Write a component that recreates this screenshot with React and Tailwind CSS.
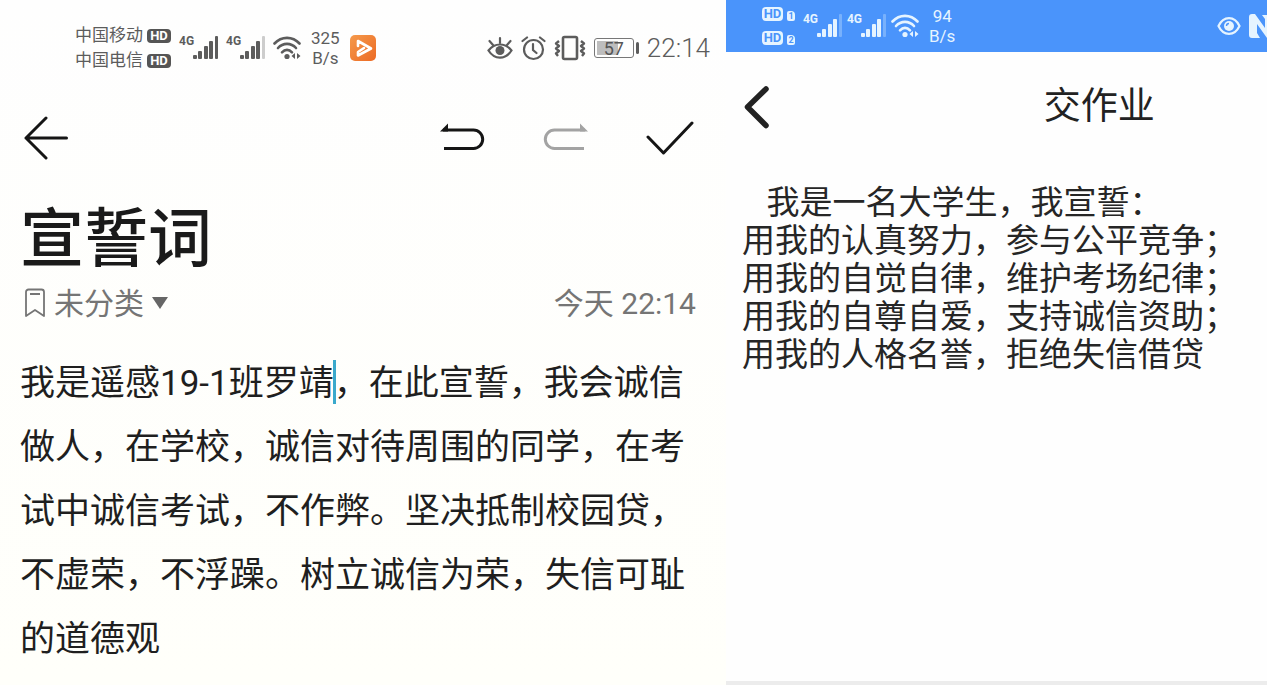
import { useState } from 'react'

const NOTE = '我是遥感19-1班罗靖，在此宣誓，我会诚信做人，在学校，诚信对待周围的同学，在考试中诚信考试，不作弊。坚决抵制校园贷，不虚荣，不浮躁。树立诚信为荣，失信可耻的道德观'

const HOMEWORK = [
  '   我是一名大学生，我宣誓：',
  '用我的认真努力，参与公平竞争；',
  '用我的自觉自律，维护考场纪律；',
  '用我的自尊自爱，支持诚信资助；',
  '用我的人格名誉，拒绝失信借贷',
].join('\n')

function Signal({ weak }) {
  return (
    <div className="flex items-start">
      <span className="w-3.5 text-[12px] leading-3 font-bold">4G</span>
      <svg width="25" height="26" viewBox="0 0 25 26" fill="currentColor">
        <rect x="0" y="20" width="4" height="4" rx="1" />
        <rect x="5" y="16" width="4" height="8" rx="1" />
        <rect x="11" y="11" width="4" height="13" rx="1" />
        <rect x="16" y="6" width="4" height="18" rx="1" />
        <rect x="22" y="1" width="3" height="23" rx="1" opacity={weak ? 0.3 : 1} />
      </svg>
    </div>
  )
}

function Wifi() {
  return (
    <svg width="28" height="24" viewBox="0 0 28 24" fill="none" stroke="currentColor" strokeWidth="2.600" strokeLinecap="round">
      <path d="M1.500 7.500C8.500 0 19.500 0 26.500 7.500" />
      <path d="M5 12c5-5.500 13-5.500 18 0" />
      <path d="M9 16.300c3-3.200 7-3.200 10 0" />
      <circle cx="14" cy="20.500" r="2.600" fill="currentColor" stroke="none" />
      <path d="M22 17v6l-3.500-3zM24 17v6l3.500-3z" fill="currentColor" stroke="none" />
    </svg>
  )
}

function Sim({ n }) {
  return (
    <div className="flex items-end gap-1">
      <span className="w-[21px] rounded-sm bg-[#e6f4ff] text-center text-[13px] leading-[14px] font-bold text-[#4a94fb]">HD</span>
      <span className="w-2 rounded-[2px] rounded-tr-sm bg-[#e6f4ff] text-center text-[9px] leading-[10px] font-bold text-[#4a94fb]">{n}</span>
    </div>
  )
}

function Speed({ value }) {
  return (
    <div className="text-center text-[17px] leading-5">
      <div>{value}</div>
      <div>B/s</div>
    </div>
  )
}

function NoteStatusBar() {
  return (
    <div className="flex h-24 items-center pr-4 pl-[75px] text-[#5c5c5c]">
      <div className="text-[17px] leading-[25px]">
        {['中国移动', '中国电信'].map(name => (
          <div key={name} className="flex items-center gap-1">
            {name}
            <span className="w-6 rounded-sm bg-[#555] text-center text-[13px] leading-[14px] font-bold text-white">HD</span>
          </div>
        ))}
      </div>
      <div className="ml-2 flex items-center gap-2">
        <Signal />
        <Signal weak />
        <Wifi />
      </div>
      <div className="ml-2.5 flex items-center gap-2.5">
        <Speed value="325" />
        <svg width="26" height="26" viewBox="0 0 26 26">
          <defs>
            <linearGradient id="play" x1="0" y1="0" x2="1" y2="1">
              <stop offset="0" stopColor="#f59a4c" />
              <stop offset="1" stopColor="#ec6a24" />
            </linearGradient>
          </defs>
          <rect width="26" height="26" rx="5" fill="url(#play)" />
          <path d="M8 11V6l13 7.500L8 20.500V17l6-4" fill="none" stroke="#fff" strokeWidth="2.600" strokeLinejoin="round" strokeLinecap="round" />
        </svg>
      </div>

      <div className="ml-auto flex items-center gap-2">
        <svg width="26" height="24" viewBox="0 0 26 24" fill="none" stroke="currentColor" strokeWidth="2.200" strokeLinecap="round">
          <path d="M1.500 14.500C7.500 6.500 18.500 6.500 24.500 14.500 18.500 24 7.500 24 1.500 14.500z" />
          <path d="M13 2v5M2.500 5l3.500 4M23.500 5 20 9" />
          <circle cx="13" cy="14.500" r="4.500" fill="currentColor" stroke="none" />
        </svg>
        <svg width="25" height="25" viewBox="0 0 25 25" fill="none" stroke="currentColor" strokeWidth="2.200" strokeLinecap="round">
          <circle cx="12.500" cy="13.500" r="9.500" />
          <path d="M12 8v6l3.500 3M1.500 5 6 1.500M23.500 5 19 1.500" />
        </svg>
        <svg width="32" height="26" viewBox="0 0 32 26" fill="none" stroke="currentColor" strokeWidth="2.600" strokeLinejoin="round">
          <rect x="9" y="2" width="14" height="22" rx="1.500" />
          <path d="M5 6 2 8.500 5 11l-3 2.500L5 16l-3 2.500L4 21M27 6l3 2.500-3 2.500 3 2.500-3 2.500 3 2.500-2 2.500" strokeWidth="2.400" />
        </svg>
        <div className="flex items-center gap-0.5">
          <div className="h-5 w-10 rounded-[3px] border border-[#777] bg-linear-to-r from-[#bdbdbd] from-60% to-transparent to-60% bg-clip-content p-0.5 text-center text-[18px] leading-[15px] text-[#555]">57</div>
          <div className="h-3 w-[3px] rounded-xs bg-[#5c5c5c]" />
        </div>
        <span className="text-[26px] leading-8 font-light">22:14</span>
      </div>
    </div>
  )
}

function NoteScreen() {
  const [text, setText] = useState(NOTE)

  return (
    <section className="flex w-[57.3%] shrink-0 flex-col bg-linear-to-b from-[#fefefe] to-[#fffffa]">
      <NoteStatusBar />

      <div className="flex h-[84px] items-center pr-8 pl-6 text-[#151515]">
        <button aria-label="返回">
          <svg width="44" height="44" viewBox="0 0 44 44" fill="none" stroke="currentColor" strokeWidth="3" strokeLinecap="round" strokeLinejoin="round">
            <path d="M22 2 2 22l20 20M2 22h40.500" />
          </svg>
        </button>
        <div className="ml-auto flex items-center gap-[58px]">
          <button aria-label="撤销">
            <svg width="45" height="30" viewBox="0 2 45 30" fill="none" stroke="currentColor" strokeWidth="3">
              <path d="M3 9h30.500a9.200 9.200 0 0 1 0 18.400H4" />
              <path d="M0 10.500 8 2.500v8z" fill="currentColor" stroke="none" />
            </svg>
          </button>
          <button aria-label="重做" className="text-[#a3a3a3]">
            <svg width="45" height="30" viewBox="0 2 45 30" fill="none" stroke="currentColor" strokeWidth="3">
              <path d="M42 9H11.500a9.200 9.200 0 0 0 0 18.400H41" />
              <path d="M45 10.500 37 2.500v8z" fill="currentColor" stroke="none" />
            </svg>
          </button>
          <button aria-label="完成">
            <svg width="48" height="34" viewBox="0 0 48 34" fill="none" stroke="currentColor" strokeWidth="3" strokeLinecap="round" strokeLinejoin="round">
              <path d="M2 16l15.500 16L46 2" />
            </svg>
          </button>
        </div>
      </div>

      <h1 className="mt-[22px] px-5 text-[64px] leading-[76px] font-medium text-[#1a1a1a]">宣誓词</h1>

      <div className="flex h-[50px] items-center justify-between pr-[30px] pl-6 text-[30px] text-[#757575]">
        <button className="flex items-center gap-2">
          <svg width="22" height="30" viewBox="0 0 22 30" fill="none" stroke="currentColor" strokeWidth="1.800" strokeLinejoin="round">
            <path d="M2 4a2.500 2.500 0 0 1 2.500-2.500h13A2.500 2.500 0 0 1 20 4v24l-9-6-9 6zM6 6h10" />
          </svg>
          未分类
          <svg width="16" height="12" viewBox="0 0 16 12" fill="#666">
            <path d="M0 0h16L8 12z" />
          </svg>
        </button>
        <span>今天 22:14</span>
      </div>

      <div className="relative pt-6">
        <textarea
          aria-label="笔记内容"
          rows={5}
          value={text}
          onChange={(e) => setText(e.target.value)}
          className="block w-full resize-none overflow-hidden px-5 text-[35px] leading-[64px] text-[#1f1f1f] caret-[#2fa8cc] outline-none"
        />
        <span className="absolute top-8 left-[333px] h-11 w-[3px] bg-[#3aa9cc]" />
      </div>
    </section>
  )
}

function HomeworkScreen() {
  const [text, setText] = useState(HOMEWORK)

  return (
    <section className="flex min-w-0 flex-1 flex-col overflow-hidden bg-[#fefefe]">
      <div className="flex h-[52px] items-center overflow-hidden bg-[#4a94fb] pl-9 text-[#e6f4ff]">
        <div className="flex flex-col gap-2.5">
          <Sim n="1" />
          <Sim n="2" />
        </div>
        <div className="ml-2 flex items-center gap-[5px]">
          <Signal weak />
          <Signal weak />
          <Wifi />
        </div>
        <div className="ml-2.5">
          <Speed value="94" />
        </div>
        <div className="-mr-1.5 ml-auto flex items-center gap-2">
          <svg width="24" height="20" viewBox="0 0 24 20" fill="none" stroke="currentColor" strokeWidth="2.200">
            <path d="M1.500 10C6.500-.5 17.500-.5 22.500 10 17.500 20.500 6.500 20.500 1.500 10z" />
            <circle cx="12" cy="10" r="5" fill="currentColor" stroke="none" />
            <path d="M9.500 10A2.500 2.500 0 0 1 12 7.500" stroke="#4a94fb" strokeWidth="1.400" />
          </svg>
          <svg width="24" height="24" viewBox="0 0 24 24" fill="currentColor">
            <path d="M3 0h3l10 14V5l-3-4h8a3 3 0 0 1 3 3v17a3 3 0 0 1-3 3h-3L8 10v9l3 5H3a3 3 0 0 1-3-3V3a3 3 0 0 1 3-3z" />
          </svg>
        </div>
      </div>

      {/* 手机屏幕比可见区域宽，标题按整屏居中 */}
      <div className="grid h-[110px] w-[138%] grid-cols-[1fr_auto_1fr] items-center px-[18px] text-[#222]">
        <button aria-label="返回" className="justify-self-start">
          <svg width="26" height="44" viewBox="0 0 26 44" fill="none" stroke="currentColor" strokeWidth="5.500" strokeLinecap="round" strokeLinejoin="round">
            <path d="M22 4 3.500 22 22 40.500" />
          </svg>
        </button>
        <h2 className="text-[37px] leading-[48px]">交作业</h2>
      </div>

      <textarea
        aria-label="作业内容"
        rows={5}
        value={text}
        onChange={(e) => setText(e.target.value)}
        className="mt-[22px] block w-full resize-none overflow-hidden px-4 text-[33px] leading-[38px] text-[#262626] outline-none"
      />
      <div className="mt-auto h-1 bg-[#ececec]" />
    </section>
  )
}

export default function App() {
  return (
    <main lang="zh-CN" className="flex min-h-screen font-[Roboto,'Noto_Sans_CJK_SC',sans-serif]">
      <NoteScreen />
      <HomeworkScreen />
    </main>
  )
}
